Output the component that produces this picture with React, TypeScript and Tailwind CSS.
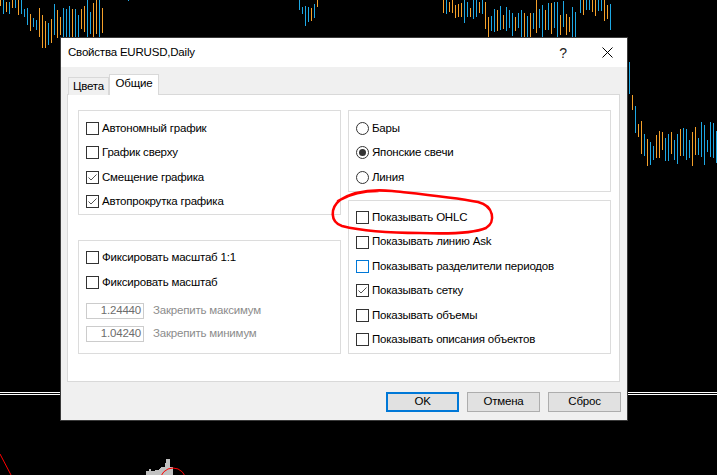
import React from "react";

type P = [number, number, number];

function makeRng(seed: number) {
  let s = seed;
  return () => {
    s = (s * 16807) % 2147483647;
    return (s - 1) / 2147483646;
  };
}

const segments: P[][] = [
  [[0, -10, 12], [8, -5, 18], [15, -10, 10], [22, -5, 25], [30, 0, 35], [38, 5, 45], [45, 15, 55], [50, 10, 50], [55, 0, 40], [60, 0, 40], [80, -5, 45], [104, -5, 40]],
  [[128, -10, 4], [131, -10, 3]],
  [[299, -5, 12], [303, 0, 25], [309, 5, 30], [314, 0, 24], [318, -5, 8]],
  [[443, -10, 15], [455, -5, 20], [465, 0, 25], [480, -5, 15], [488, 0, 40], [575, 0, 40]],
  [[580, -10, 20], [600, -10, 15], [612, -5, 36]],
  [[629, 60, 95], [633, 92, 128], [641, 120, 165], [650, 140, 177], [660, 122, 163], [690, 120, 167], [717, 118, 167]],
];

function interp(seg: P[], x: number): [number, number] {
  for (let i = 0; i < seg.length - 1; i++) {
    const a = seg[i];
    const b = seg[i + 1];
    if (x >= a[0] && x <= b[0]) {
      const t = b[0] === a[0] ? 0 : (x - a[0]) / (b[0] - a[0]);
      return [a[1] + (b[1] - a[1]) * t, a[2] + (b[2] - a[2]) * t];
    }
  }
  const l = seg[seg.length - 1];
  return [l[1], l[2]];
}

function Chart() {
  const rnd = makeRng(12345);
  const bars: { x: number; y: number; h: number; c: string }[] = [];
  segments.forEach((seg) => {
    const x0 = seg[0][0];
    const x1 = seg[seg.length - 1][0];
    for (let x = x0; x <= x1; x += 3) {
      const [t, b] = interp(seg, x);
      const h = b - t;
      const y1 = Math.round(t + rnd() * h * 0.45);
      const y2 = Math.round(b - rnd() * h * 0.35);
      bars.push({ x, y: y1, h: Math.max(2, y2 - y1), c: rnd() > 0.5 ? "#f5a12a" : "#1ea8e4" });
    }
  });
  return (
    <svg className="absolute inset-0" width="717" height="475" viewBox="0 0 717 475" shapeRendering="crispEdges">
      {bars.map((b, i) => (
        <rect key={i} x={b.x} y={b.y} width="1" height={b.h} fill={b.c} />
      ))}
      <rect x="0" y="392" width="717" height="1" fill="#ffffff" />
      <rect x="0" y="394" width="717" height="1" fill="#ffffff" />
      <line x1="0" y1="454" x2="11" y2="475" stroke="#ff0000" strokeWidth="1" shapeRendering="auto" />
      <polygon points="146,471 149,471 149,469 151,469 151,471 155,471 155,470 158,470 162,467 165,467 166,459 170,459 170,467 173,467 173,475 146,475" fill="#c0c0c0" />
      <circle cx="173" cy="481" r="13" fill="none" stroke="#ff0000" strokeWidth="1" shapeRendering="auto" />
    </svg>
  );
}

function Check({ checked = false, blue = false }: { checked?: boolean; blue?: boolean }) {
  return (
    <span className={blue ? "w-[13px] h-[13px] border border-[#0078d7] bg-white flex items-center justify-center shrink-0" : "w-[13px] h-[13px] border border-[#333333] bg-white flex items-center justify-center shrink-0"}>
      {checked && (
        <svg width="11" height="11" viewBox="0 0 11 11">
          <path d="M1.5 5.5 L4 8 L9.5 2.5" fill="none" stroke="#555555" strokeWidth="1" />
        </svg>
      )}
    </span>
  );
}

function Radio({ on = false }: { on?: boolean }) {
  return (
    <span className="w-[13px] h-[13px] rounded-full border border-[#333333] bg-white flex items-center justify-center shrink-0">
      {on && <span className="w-[7px] h-[7px] rounded-full bg-[#333333]" />}
    </span>
  );
}

function CRow({ label, checked, blue, h = "h-[24.5px]" }: { label: string; checked?: boolean; blue?: boolean; h?: string }) {
  return (
    <div className={`flex items-center ${h} pl-[7px] gap-[3px]`}>
      <Check checked={checked} blue={blue} />
      <span className="whitespace-nowrap">{label}</span>
    </div>
  );
}

function RRow({ label, on }: { label: string; on?: boolean }) {
  return (
    <div className="flex items-center h-[24.5px] pl-[7px] gap-[3px]">
      <Radio on={on} />
      <span className="whitespace-nowrap">{label}</span>
    </div>
  );
}

function NumRow({ value, label }: { value: string; label: string }) {
  return (
    <div className="flex items-center h-[16px] pl-[7px] gap-[9px]">
      <div className="w-[58px] h-[16px] border border-[#cccccc] bg-white flex items-center justify-end pr-[2px] text-[#6d6d6d]">
        {value}
      </div>
      <span className="text-[#8c8c8c] whitespace-nowrap">{label}</span>
    </div>
  );
}

function Btn({ label, def = false }: { label: string; def?: boolean }) {
  return (
    <div className={def ? "w-[73px] h-[20px] border-2 border-[#0078d7] bg-[#e1e1e1] flex items-center justify-center" : "w-[73px] h-[20px] border border-[#adadad] bg-[#e1e1e1] flex items-center justify-center"}>
      {label}
    </div>
  );
}

export default function App() {
  return (
    <div className="relative w-[717px] h-[475px] bg-black overflow-hidden font-['Liberation_Sans','Noto_Sans_CJK_SC',sans-serif] text-[11.5px] tracking-[-0.2px] leading-none text-black">
      <Chart />
      <div className="absolute left-[60px] top-[37px] w-[568px] border border-[#3a3a3a] bg-[#f0f0f0] flex flex-col">
        <div className="h-[29px] bg-white flex items-center pl-[7px] pr-[14px]">
          <span className="flex-1 text-[11.5px]">Свойства EURUSD,Daily</span>
          <span className="text-[14px] w-[12px] text-center mr-[33px] text-[#222222]">?</span>
          <svg width="11" height="11" viewBox="0 0 11 11">
            <path d="M0.5 0.5 L10.5 10.5 M10.5 0.5 L0.5 10.5" stroke="#000000" strokeWidth="1" fill="none" />
          </svg>
        </div>
        <div className="pt-[7px] pl-[6px] pr-[7px]">
          <div className="flex items-end h-[21px] pl-[1px]">
            <div className="h-[18px] w-[41px] border border-b-0 border-[#d9d9d9] bg-[#f0f0f0] flex items-center justify-center pt-[1px]">Цвета</div>
            <div className="relative z-10 h-[21px] w-[50px] border border-b-0 border-[#d9d9d9] bg-white flex items-center justify-center pb-[2px]">Общие</div>
          </div>
          <div className="-mt-px h-[288px] border border-[#d9d9d9] bg-white pt-[15px] pl-[10px] pr-[8px]">
            <div className="grid grid-cols-[263px_263px] gap-x-[7px]">
              <div className="flex flex-col">
                <div className="border border-[#dcdcdc] pt-[5px]">
                  <CRow label="Автономный график" />
                  <CRow label="График сверху" />
                  <CRow label="Смещение графика" checked />
                  <CRow label="Автопрокрутка графика" checked />
                </div>
                <div className="mt-[25px] border border-[#dcdcdc] pt-[4px] pb-[11px]">
                  <CRow label="Фиксировать масштаб 1:1" h="h-[25px]" />
                  <CRow label="Фиксировать масштаб" h="h-[25px]" />
                  <div className="mt-[8px] flex flex-col gap-[7px]">
                    <NumRow value="1.24440" label="Закрепить максимум" />
                    <NumRow value="1.04240" label="Закрепить минимум" />
                  </div>
                </div>
              </div>
              <div className="flex flex-col">
                <div className="border border-[#dcdcdc] pt-[5px] pb-[1px]">
                  <RRow label="Бары" />
                  <RRow label="Японские свечи" on />
                  <RRow label="Линия" />
                </div>
                <div className="mt-[8px] border border-[#dcdcdc] pt-[5px] pb-[1px]">
                  <CRow label="Показывать OHLC" h="h-[24.4px]" />
                  <CRow label="Показывать линию Ask" h="h-[24.4px]" />
                  <CRow label="Показывать разделители периодов" blue h="h-[24.4px]" />
                  <CRow label="Показывать сетку" checked h="h-[24.4px]" />
                  <CRow label="Показывать объемы" h="h-[24.4px]" />
                  <CRow label="Показывать описания объектов" h="h-[24.4px]" />
                </div>
              </div>
            </div>
          </div>
        </div>
        <div className="flex justify-end gap-[8px] pt-[10px] pb-[8px] pr-[6px]">
          <Btn label="OK" def />
          <Btn label="Отмена" />
          <Btn label="Сброс" />
        </div>
      </div>
      <svg className="absolute inset-0 pointer-events-none" width="717" height="475" viewBox="0 0 717 475">
        <path
          d="M338 201 C352 192 372 189 392 191 C420 194 452 197 478 202 C494 206 496 222 486 228 C472 234 446 234 420 233 C392 233 362 231 342 226 C330 222 330 208 340 200 C352 193 366 191 378 191"
          fill="none"
          stroke="#ff0000"
          strokeWidth="2.6"
          strokeLinecap="round"
        />
      </svg>
    </div>
  );
}
